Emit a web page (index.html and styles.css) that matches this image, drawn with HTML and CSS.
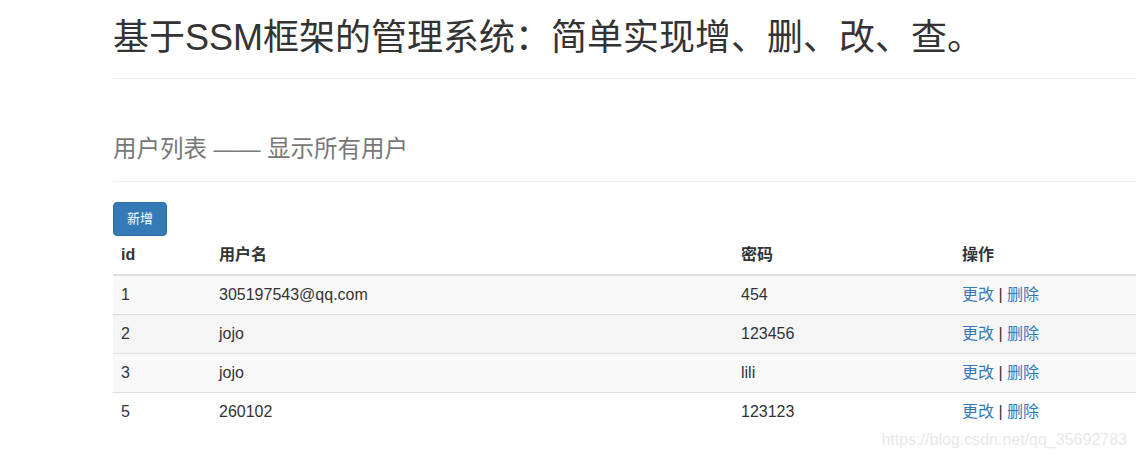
FILE: index.html
```html
<!DOCTYPE html>
<html lang="zh-CN">
<head>
    <meta charset="UTF-8">
    <meta name="viewport" content="width=device-width, initial-scale=1.0">
    <title>用户列表</title>
    <link rel="stylesheet" href="styles.css">
</head>
<body>
    <div class="container">
        <div class="page-header">
            <h1>基于SSM框架的管理系统：简单实现增、删、改、查。</h1>
        </div>

        <div class="sub-header">
            <h2>用户列表 —— 显示所有用户</h2>
        </div>

        <a href="#" class="btn btn-primary">新增</a>

        <table class="table">
            <thead>
                <tr>
                    <th class="col-id">id</th>
                    <th class="col-name">用户名</th>
                    <th class="col-pwd">密码</th>
                    <th>操作</th>
                </tr>
            </thead>
            <tbody>
                <tr>
                    <td>1</td>
                    <td>305197543@qq.com</td>
                    <td>454</td>
                    <td><a href="#">更改</a> | <a href="#">删除</a></td>
                </tr>
                <tr class="hover">
                    <td>2</td>
                    <td>jojo</td>
                    <td>123456</td>
                    <td><a href="#">更改</a> | <a href="#">删除</a></td>
                </tr>
                <tr>
                    <td>3</td>
                    <td>jojo</td>
                    <td>lili</td>
                    <td><a href="#">更改</a> | <a href="#">删除</a></td>
                </tr>
                <tr>
                    <td>5</td>
                    <td>260102</td>
                    <td>123123</td>
                    <td><a href="#">更改</a> | <a href="#">删除</a></td>
                </tr>
            </tbody>
        </table>
    </div>

    <div class="watermark">https://blog.csdn.net/qq_35692783</div>
</body>
</html>
```

FILE: styles.css
```css
body {
    font-family: "Liberation Sans", "Noto Sans CJK SC", sans-serif;
    font-size: 16px;
    color: #333;
    margin: 0;
    padding: 0;
    background-color: #fff;
}

.container {
    margin-left: 113px;
}

.page-header {
    margin-top: 18px;
    padding-bottom: 20px;
    border-bottom: 1px solid #eee;
}

.page-header h1 {
    margin: 0;
    font-size: 36px;
    font-weight: 400;
    line-height: 40px;
}

.sub-header {
    margin-top: 54px;
    padding-bottom: 16px;
    border-bottom: 1px solid #eee;
}

.sub-header h2 {
    margin: 0;
    font-size: 23.5px;
    font-weight: 400;
    line-height: 32px;
    color: #777;
}

.btn {
    display: inline-block;
    margin-top: 20px;
    padding: 6px 13px;
    font-size: 13px;
    line-height: 20px;
    border: 1px solid transparent;
    border-radius: 4px;
    text-decoration: none;
}

.btn-primary {
    background-color: #337ab7;
    border-color: #2e6da4;
    color: #fff;
}

.table {
    width: 100%;
    border-collapse: collapse;
    border-spacing: 0;
}

.table th, .table td {
    padding: 8px;
    line-height: 22px;
    text-align: left;
    vertical-align: top;
}

.table th {
    font-weight: bold;
    border-bottom: 2px solid #ddd;
}

.table td {
    border-top: 1px solid #ddd;
}

.col-id {
    width: 82px;
}

.col-name {
    width: 506px;
}

.col-pwd {
    width: 205px;
}

.table tbody tr:nth-child(odd) {
    background-color: #f9f9f9;
}

.table tbody tr.hover {
    background-color: #f5f5f5;
}

.table a {
    color: #337ab7;
    text-decoration: none;
}

.watermark {
    position: absolute;
    right: 9px;
    top: 430px;
    font-size: 16px;
    line-height: 20px;
    color: #e8e8e8;
}
```
